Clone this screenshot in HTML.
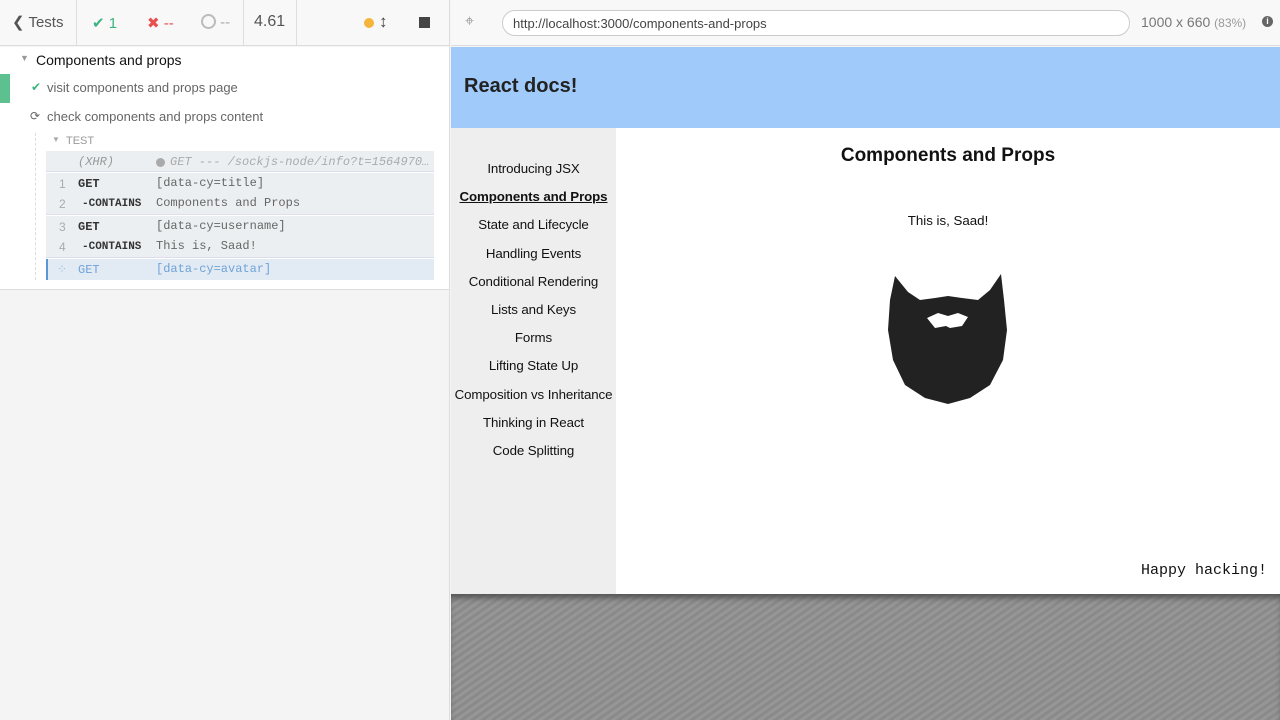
<!DOCTYPE html>
<html><head><meta charset="utf-8"><style>
*{margin:0;padding:0;box-sizing:border-box}
body{width:1280px;height:720px;overflow:hidden;font-family:"Liberation Sans",sans-serif;background:#f5f5f5;position:relative}
.left{position:absolute;left:0;top:0;width:450px;height:720px;background:#f4f4f4;border-right:1px solid #ddd}
.hdr{height:46px;background:#f8f8f8;border-bottom:1px solid #ddd;display:flex;align-items:center;font-size:15px;color:#555;position:relative}
.hdr .sep{position:absolute;top:0;height:46px;border-left:1px solid #ddd}
.rep{position:absolute;top:47px;left:0;width:449px;height:243px;background:#fff;border-bottom:1px solid #ddd}
.mono{font-family:"Liberation Mono",monospace}
.url{position:absolute;left:502px;top:10px;width:628px;height:26px;border:1px solid #ccc;border-radius:13px;background:#fff;font-size:13px;color:#444;padding:5px 0 0 10px}
.cmd{position:absolute;left:46px;width:388px;font-size:12px}
</style></head><body>
<div class="left">
 <div class="hdr">
  <span style="position:absolute;left:12px;top:13px;color:#555">&#10094; Tests</span>
  <div class="sep" style="left:76px"></div>
  <span style="position:absolute;left:92px;top:14px;color:#3fb37f">&#10004; 1</span>
  <span style="position:absolute;left:147px;top:14px;color:#e94f4f">&#10006; --</span>
  <span style="position:absolute;left:201px;top:14px;color:#aaa"><span style="display:inline-block;width:15px;height:15px;border:2px solid #bbb;border-radius:50%;vertical-align:-2px"></span> --</span>
  <div class="sep" style="left:243px"></div>
  <span style="position:absolute;left:254px;top:13px;color:#555;font-size:16px">4.61</span>
  <div class="sep" style="left:296px"></div>
  <span style="position:absolute;left:364px;top:18px;width:10px;height:10px;border-radius:50%;background:#f5b43a"></span>
  <span style="position:absolute;left:379px;top:12px;color:#444;font-weight:bold;font-size:17px">&#8597;</span>
  <span style="position:absolute;left:419px;top:17px;width:11px;height:11px;background:#444"></span>
 </div>
 <div class="rep">
  <span style="position:absolute;left:20px;top:6px;font-size:9px;color:#999">&#9660;</span>
  <span style="position:absolute;left:36px;top:5px;font-size:14px;color:#111">Components and props</span>
  <div style="position:absolute;left:0;top:27px;width:10px;height:29px;background:#5cc18e"></div>
  <span style="position:absolute;left:31px;top:33px;font-size:12px;color:#3fb37f">&#10004;</span>
  <span style="position:absolute;left:47px;top:33px;font-size:13px;color:#666">visit components and props page</span>
  <span style="position:absolute;left:30px;top:62px;font-size:12px;color:#666">&#10227;</span>
  <span style="position:absolute;left:47px;top:62px;font-size:13px;color:#666">check components and props content</span>
  <div style="position:absolute;left:35px;top:86px;height:147px;border-left:1px dashed #ddd"></div>
  <span style="position:absolute;left:52px;top:88px;font-size:8px;color:#aaa">&#9660;</span>
  <span style="position:absolute;left:66px;top:88px;font-size:11px;color:#999">TEST</span>
  <div class="cmd" style="top:104px;height:21px;background:#eceff2;border-bottom:1px solid #dde">
   <span class="mono" style="position:absolute;left:32px;top:4px;color:#999;font-style:italic">(XHR)</span>
   <span style="position:absolute;left:110px;top:7px;width:9px;height:9px;border-radius:50%;background:#aaa"></span>
   <span class="mono" style="position:absolute;left:124px;top:4px;color:#aaa;font-style:italic;white-space:nowrap">GET --- /sockjs-node/info?t=1564970…</span>
  </div>
  <div class="cmd" style="top:126px;height:42px;background:#eceff2;border-bottom:1px solid #dde">
   <span style="position:absolute;left:13px;top:4px;color:#aaa">1</span>
   <span class="mono" style="position:absolute;left:32px;top:4px;color:#333;font-weight:bold">GET</span>
   <span class="mono" style="position:absolute;left:110px;top:3px;color:#666">[data-cy=title]</span>
   <span style="position:absolute;left:13px;top:24px;color:#aaa">2</span>
   <span class="mono" style="position:absolute;left:36px;top:25px;color:#333;font-weight:bold;font-size:11px">-CONTAINS</span>
   <span class="mono" style="position:absolute;left:110px;top:23px;color:#666">Components and Props</span>
  </div>
  <div class="cmd" style="top:169px;height:42px;background:#eceff2;border-bottom:1px solid #dde">
   <span style="position:absolute;left:13px;top:4px;color:#aaa">3</span>
   <span class="mono" style="position:absolute;left:32px;top:4px;color:#333;font-weight:bold">GET</span>
   <span class="mono" style="position:absolute;left:110px;top:3px;color:#666">[data-cy=username]</span>
   <span style="position:absolute;left:13px;top:24px;color:#aaa">4</span>
   <span class="mono" style="position:absolute;left:36px;top:25px;color:#333;font-weight:bold;font-size:11px">-CONTAINS</span>
   <span class="mono" style="position:absolute;left:110px;top:23px;color:#666">This is, Saad!</span>
  </div>
  <div class="cmd" style="top:212px;height:21px;background:#e2ebf4;border-left:2px solid #5b95d6">
   <span style="position:absolute;left:9px;top:3px;color:#9bbde0">&#8280;</span>
   <span class="mono" style="position:absolute;left:30px;top:4px;color:#6fa2d8">GET</span>
   <span class="mono" style="position:absolute;left:108px;top:3px;color:#6fa2d8">[data-cy=avatar]</span>
  </div>
 </div>
</div>
<div style="position:absolute;left:451px;top:0;width:829px;height:46px;background:#f8f8f8;border-bottom:1px solid #ddd"></div>
<span style="position:absolute;left:465px;top:13px;color:#999;font-size:16px">&#8982;</span>
<div class="url">http://localhost:3000/components-and-props</div>
<span style="position:absolute;left:1141px;top:14px;font-size:14px;color:#777">1000 x 660 <span style="font-size:12px;color:#999">(83%)</span></span>
<span style="position:absolute;left:1262px;top:16px;width:11px;height:11px;border-radius:50%;background:#666;color:#fff;font-size:9px;text-align:center;line-height:11px;font-weight:bold">i</span>
<div style="position:absolute;left:451px;top:47px;width:829px;height:81px;background:#a0cafa"></div>
<span style="position:absolute;left:464px;top:75px;font-size:20px;font-weight:bold;color:#222">React docs!</span>
<div style="position:absolute;left:451px;top:128px;width:165px;height:466px;background:#eeeeee"></div>
<div style="position:absolute;left:616px;top:128px;width:664px;height:466px;background:#fff"></div>
<div style="position:absolute;left:451px;top:155px;width:165px;text-align:center;font-size:13.3px;color:#111;line-height:28.2px;white-space:nowrap;letter-spacing:-0.1px">
Introducing JSX<br><b style="text-decoration:underline">Components and Props</b><br>State and Lifecycle<br>Handling Events<br>Conditional Rendering<br>Lists and Keys<br>Forms<br>Lifting State Up<br>Composition vs Inheritance<br>Thinking in React<br>Code Splitting
</div>
<div style="position:absolute;left:616px;top:145px;width:664px;text-align:center;font-size:19px;font-weight:bold;color:#111">Components and Props</div>
<div style="position:absolute;left:616px;top:213px;width:664px;text-align:center;font-size:13.3px;color:#111">This is, Saad!</div>
<svg style="position:absolute;left:880px;top:268px" width="136" height="140" viewBox="880 268 136 140">
<path fill="#222" d="M895 276 L908 292 L920 300 L935 298 L948 296 L962 298 L978 300 L990 290 L1001 274 L1004 300 L1007 330 L1003 360 L990 385 L970 398 L948 404 L925 398 L905 385 L893 360 L888 330 L890 300 Z"/>
<path fill="#fff" d="M927 318 L938 313 L948 316 L958 313 L968 317 L962 326 L950 328 L946 326 L935 328 Z"/>
</svg>
<span class="mono" style="position:absolute;left:1141px;top:562px;font-size:15px;color:#111">Happy hacking!</span>
<div style="position:absolute;left:451px;top:594px;width:829px;height:126px;background:repeating-linear-gradient(-35deg,#8a8a8a 0,#8a8a8a 3px,#969696 3px,#969696 6px);box-shadow:inset 0 6px 6px -2px #555"></div>
</body></html>
